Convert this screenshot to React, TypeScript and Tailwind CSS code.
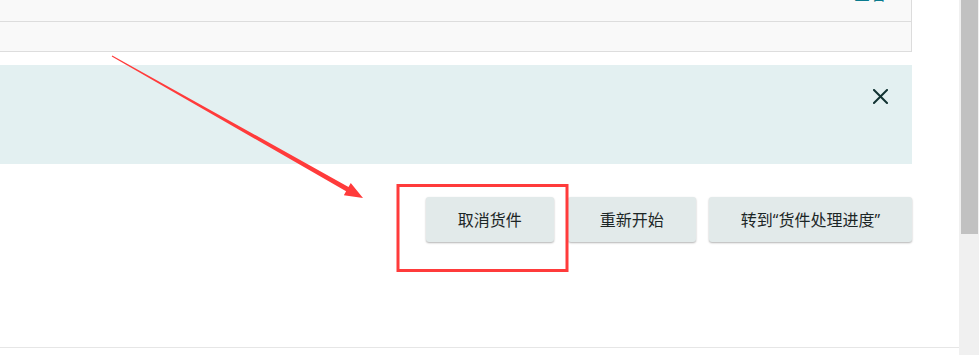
import React from "react";

const font = { fontFamily: '"Open Sans", "Noto Sans CJK SC", sans-serif' };

function Btn({ children, className = "" }: { children: React.ReactNode; className?: string }) {
  return (
    <button
      className={`h-[45px] rounded-[3px] bg-[#e2eaea] px-8 text-[16px] leading-none text-[#1c2626] shadow-[0_1px_2px_rgba(0,0,0,0.3)] ${className}`}
    >
      {children}
    </button>
  );
}

export default function App() {
  return (
    <div className="relative flex h-[355px] w-[979px] overflow-hidden bg-white" style={font}>
      <div className="flex w-[959px] flex-col">
        {/* top panel */}
        <div className="w-[912px] border-r border-[#dcdcdc] bg-[#f9f9f9]">
          <div className="flex h-[22px] justify-end overflow-hidden border-b border-[#dddddd] pr-[25px]">
            <span className="-mt-[18px] text-[16px] leading-[24px] text-[#0b7b8e]">查看</span>
          </div>
          <div className="h-[30px] border-b border-[#dddddd]" />
        </div>

        {/* alert */}
        <div className="mt-[13px] flex h-[99px] w-[912px] justify-end bg-[#e3f0f1] pr-[24px] pt-[24px]">
          <svg width="15" height="15" viewBox="0 0 15 15" className="text-[#123333]">
            <path d="M1 1L14 14M14 1L1 14" stroke="currentColor" strokeWidth="2" strokeLinecap="square" />
          </svg>
        </div>

        {/* buttons */}
        <div className="mt-[33px] flex w-[912px] justify-end">
          <Btn>取消货件</Btn>
          <Btn className="ml-[14px]">重新开始</Btn>
          <Btn className="ml-[13px]">转到“货件处理进度”</Btn>
        </div>

        <div className="mt-[105px] h-px w-[959px] bg-[#e6e6e6]" />
      </div>

      {/* scrollbar */}
      <div className="h-[355px] w-[20px] bg-[#f0f0f0] pl-[2px]">
        <div className="h-[234px] w-[17px] bg-[#c1c1c1]" />
      </div>

      {/* annotation overlay */}
      <svg className="pointer-events-none absolute left-0 top-0" width="979" height="355">
        <polygon
          points="112.25,55.56 348.5,186.9 350.75,183 363,198 343.85,195.2 346.1,191.3 111.75,56.44"
          fill="#ff3b3b"
        />
        <rect x="398" y="185.5" width="169" height="85" fill="none" stroke="#ff3b3b" strokeWidth="3" />
      </svg>
    </div>
  );
}
